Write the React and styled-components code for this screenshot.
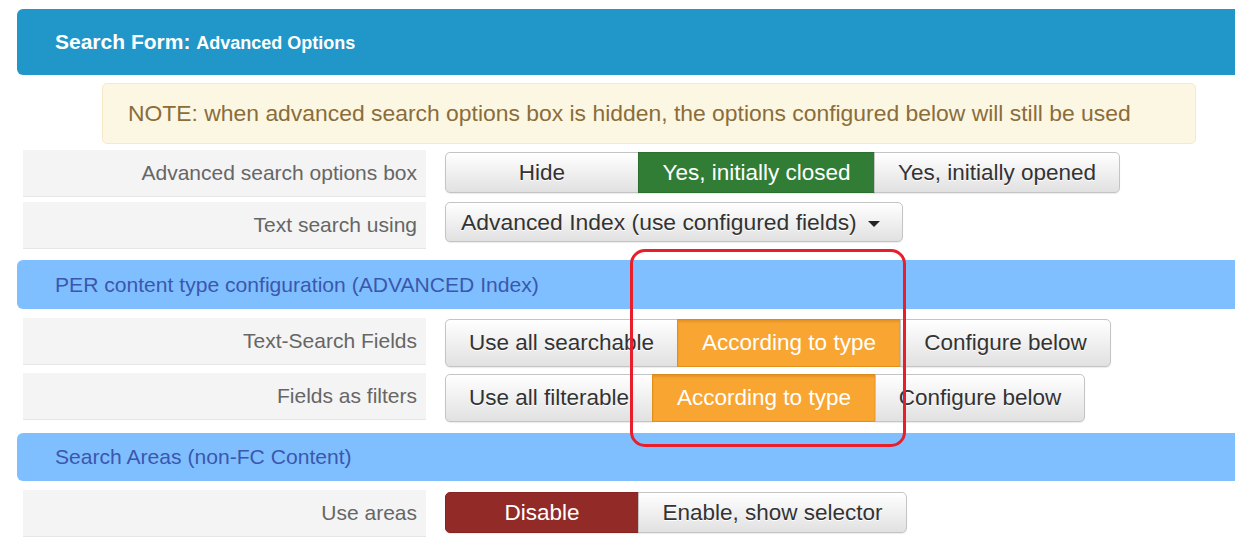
import React from "react";
import styled, { createGlobalStyle, css } from "styled-components";

const GlobalStyle = createGlobalStyle`
  html, body {
    margin: 0;
    padding: 0;
    background: #fff;
    overflow: hidden;
  }
  body {
    font-family: "Liberation Sans", Arial, sans-serif;
  }
`;

const Page = styled.div`
  position: relative;
  width: 1260px;
  padding: 9px 0 0 17px;
`;

const MainHeader = styled.div`
  height: 66px;
  display: flex;
  align-items: center;
  padding-left: 38px;
  background: #2196c9;
  border-radius: 6px 0 0 6px;
  color: #fff;
  font-weight: bold;
  font-size: 21px;
  small {
    font-size: 18px;
  }
`;

const Note = styled.div`
  box-sizing: border-box;
  margin: 8px 0 0 85px;
  width: 1094px;
  height: 61px;
  display: flex;
  align-items: center;
  padding: 0 25px;
  background: #fcf7e2;
  border: 1px solid #f8e9c6;
  border-radius: 5px;
  color: #8a6d3b;
  font-size: 22.9px;
`;

const Section = styled.div`
  box-sizing: border-box;
  margin-top: ${(p) => p.$top}px;
  height: ${(p) => p.$h}px;
  display: flex;
  align-items: center;
  padding-left: 38px;
  background: #7fbfff;
  border-radius: 6px 0 0 6px;
  color: #3b57ad;
  font-size: 21.1px;
`;

const Row = styled.div`
  display: flex;
  align-items: flex-start;
  gap: 19px;
  height: 47px;
  margin: ${(p) => p.$top}px 0 0 6px;
`;

const Label = styled.div`
  box-sizing: border-box;
  width: 403px;
  height: 47px;
  display: flex;
  align-items: center;
  justify-content: flex-end;
  padding-right: 9px;
  background: #f4f4f4;
  border-bottom: 1px solid #e6e6e6;
  color: #666;
  font-size: 21px;
`;

const Group = styled.div`
  display: flex;
  margin-top: ${(p) => p.$top ?? 2}px;
`;

const variants = {
  green: css`
    background: #317d36;
    border-color: #2b6e30;
    color: #fff;
    text-shadow: none;
  `,
  orange: css`
    background: #f8a532;
    border-color: #e28f1a;
    border-top-color: #d98a1e;
    color: #fff;
    text-shadow: none;
    box-shadow: inset 0 2px 2px rgba(180, 100, 0, 0.25);
  `,
  red: css`
    background: #922b27;
    border-color: #852420;
    color: #fff;
    text-shadow: none;
  `,
};

const Btn = styled.div`
  box-sizing: border-box;
  width: ${(p) => p.$w}px;
  height: ${(p) => p.$h || 41}px;
  display: flex;
  align-items: center;
  justify-content: center;
  white-space: nowrap;
  font-size: 22.5px;
  color: #333;
  text-shadow: 0 1px 0 #fff;
  background: linear-gradient(to bottom, #fff 0%, #e1e1e1 100%);
  border: 1px solid #c4c4c4;
  margin-left: -1px;
  box-shadow: 0 1px 1px rgba(0, 0, 0, 0.08);
  &:first-child {
    margin-left: 0;
    border-radius: 5px 0 0 5px;
  }
  &:last-child {
    border-radius: 0 5px 5px 0;
  }
  ${(p) => p.$v && variants[p.$v]}
`;

const Dropdown = styled.div`
  box-sizing: border-box;
  width: 458px;
  height: 40px;
  display: flex;
  align-items: center;
  justify-content: space-between;
  padding: 0 22px 0 15px;
  font-size: 22.9px;
  color: #333;
  text-shadow: 0 1px 0 #fff;
  background: linear-gradient(to bottom, #fff 0%, #e1e1e1 100%);
  border: 1px solid #c4c4c4;
  border-radius: 5px;
  box-shadow: 0 1px 1px rgba(0, 0, 0, 0.08);
`;

const Caret = styled.span`
  width: 0;
  height: 0;
  border-left: 6px solid transparent;
  border-right: 6px solid transparent;
  border-top: 6px solid #222;
  margin-top: 4px;
`;

// the red annotation drawn over the screenshot
const Highlight = styled.div`
  position: absolute;
  left: 630px;
  top: 249px;
  width: 276px;
  height: 198px;
  box-sizing: border-box;
  border: 3px solid #e81f2b;
  border-radius: 15px;
  pointer-events: none;
`;

export default function App() {
  return (
    <>
      <GlobalStyle />
      <Page>
        <MainHeader>
          <span>
            Search Form: <small>Advanced Options</small>
          </span>
        </MainHeader>
        <Note>
          NOTE: when advanced search options box is hidden, the options configured below will still be used
        </Note>

        <Row $top={6}>
          <Label>Advanced search options box</Label>
          <Group>
            <Btn $w={194}>Hide</Btn>
            <Btn $w={237} $v="green">Yes, initially closed</Btn>
            <Btn $w={246}>Yes, initially opened</Btn>
          </Group>
        </Row>
        <Row $top={5}>
          <Label>Text search using</Label>
          <Group $top={0}>
            <Dropdown>
              Advanced Index (use configured fields) <Caret />
            </Dropdown>
          </Group>
        </Row>

        <Section $top={11} $h={49}>PER content type configuration (ADVANCED Index)</Section>
        <Row $top={9}>
          <Label>Text-Search Fields</Label>
          <Group $top={1}>
            <Btn $w={233} $h={48}>Use all searchable</Btn>
            <Btn $w={224} $h={48} $v="orange">According to type</Btn>
            <Btn $w={211} $h={48}>Configure below</Btn>
          </Group>
        </Row>
        <Row $top={8}>
          <Label>Fields as filters</Label>
          <Group $top={1}>
            <Btn $w={208} $h={48}>Use all filterable</Btn>
            <Btn $w={224} $h={48} $v="orange">According to type</Btn>
            <Btn $w={210} $h={48}>Configure below</Btn>
          </Group>
        </Row>

        <Section $top={13} $h={48}>Search Areas (non-FC Content)</Section>
        <Row $top={9}>
          <Label>Use areas</Label>
          <Group>
            <Btn $w={194} $v="red">Disable</Btn>
            <Btn $w={269}>Enable, show selector</Btn>
          </Group>
        </Row>

        <Highlight />
      </Page>
    </>
  );
}
